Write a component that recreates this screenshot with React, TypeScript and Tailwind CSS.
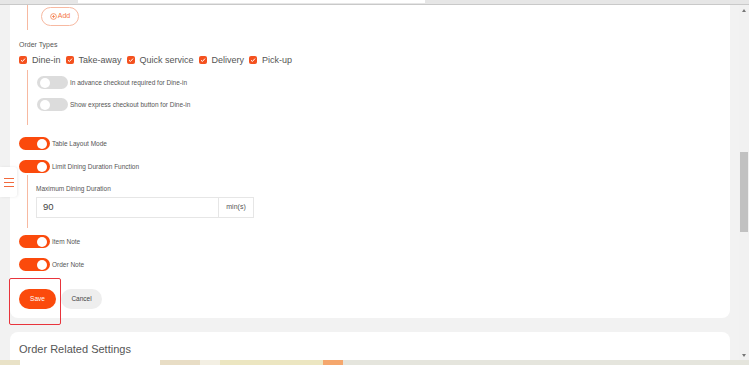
import React from 'react'

const font = { fontFamily: '"Liberation Sans", Arial, sans-serif' }

function Toggle({ on }: { on: boolean }) {
  return (
    <div className={`relative h-[13px] w-[31px] shrink-0 rounded-full ${on ? 'bg-[#fb4a0c]' : 'bg-[#dcdcdc]'}`}>
      <div className={`absolute top-[1.5px] h-[10px] w-[10px] rounded-full bg-white ${on ? 'right-[3px]' : 'left-[3px]'}`} />
    </div>
  )
}

function Check({ label }: { label: string }) {
  return (
    <div className="flex items-center gap-[5px]">
      <div className="flex h-[8px] w-[8px] items-center justify-center rounded-[2px] bg-[#f4511e]">
        <svg width="6" height="6" viewBox="0 0 6 6">
          <path d="M1 3.2 L2.4 4.5 L5 1.6" stroke="white" strokeWidth="1" fill="none" />
        </svg>
      </div>
      <span className="text-[9px] leading-[12px] text-[#555]">{label}</span>
    </div>
  )
}

function SwitchRow({ on, label, className = '' }: { on: boolean; label: string; className?: string }) {
  return (
    <div className={`flex h-[13px] items-center gap-[2px] ${className}`}>
      <Toggle on={on} />
      <span className="text-[6.5px] leading-[10px] text-[#555]">{label}</span>
    </div>
  )
}

export default function App() {
  return (
    <div className="relative flex h-[365px] w-[749px] flex-col overflow-hidden bg-[#f2f2f2]" style={font}>
      {/* top strip */}
      <div className="relative h-[5px] shrink-0 border-b border-[#c9c9c9] bg-[#e6e6e6]">
        <div className="absolute left-[78px] top-0 h-[3px] w-[347px] bg-white" />
      </div>

      <div className="flex min-h-0 flex-1">
        <div className="flex-1 overflow-hidden pl-[10px] pr-[9px]">
          {/* settings card */}
          <div className="rounded-b-lg bg-white pb-[9px] pl-[9px]">
            <div className="ml-[8px] h-[25px] border-l border-[#f7b9a1] pl-[13px] pt-[2px]">
              <div className="flex h-[19px] w-[38px] items-center justify-center gap-[1px] rounded-full border border-[#f7b9a1] text-[7px] text-[#f4743f]">
                <svg width="7" height="7" viewBox="0 0 8 8">
                  <circle cx="4" cy="4" r="3.3" stroke="#f4743f" strokeWidth="0.8" fill="none" />
                  <path d="M4 2.2 V5.8 M2.2 4 H5.8" stroke="#f4743f" strokeWidth="0.8" />
                </svg>
                Add
              </div>
            </div>

            <div className="mt-[10px] text-[7px] leading-[10px] text-[#555]">Order Types</div>
            <div className="mt-[4px] flex h-[12px] items-center gap-[5px]">
              <Check label="Dine-in" />
              <Check label="Take-away" />
              <Check label="Quick service" />
              <Check label="Delivery" />
              <Check label="Pick-up" />
            </div>

            <div className="ml-[8px] mt-[4px] h-[55px] border-l border-[#f7b9a1] pl-[9px] pt-[6px]">
              <SwitchRow on={false} label="In advance checkout required for Dine-in" />
              <SwitchRow on={false} label="Show express checkout button for Dine-in" className="mt-[9px]" />
            </div>

            <SwitchRow on label="Table Layout Mode" className="mt-[12px]" />
            <SwitchRow on label="Limit Dining Duration Function" className="mt-[10px]" />

            <div className="ml-[8px] mt-[2px] border-l border-[#f7b9a1] pb-[10px] pl-[8px] pt-[9px]">
              <div className="text-[6.5px] leading-[10px] text-[#555]">Maximum Dining Duration</div>
              <div className="mt-[3px] flex h-[21px] w-[218px] border border-[#e6e6e6]">
                <div className="flex flex-1 items-center pl-[6px] text-[9.5px] text-[#444]">90</div>
                <div className="flex w-[35px] items-center justify-center border-l border-[#e6e6e6] text-[7px] text-[#555]">min(s)</div>
              </div>
            </div>

            <SwitchRow on label="Item Note" className="mt-[7px]" />
            <SwitchRow on label="Order Note" className="mt-[10px]" />

            <div className="mt-[18px] flex gap-[5px]">
              <div className="flex h-[20px] w-[37px] items-center justify-center rounded-full bg-[#fb4a0c] text-[6.5px] text-white">Save</div>
              <div className="flex h-[20px] w-[41px] items-center justify-center rounded-full bg-[#eeeeee] text-[6.5px] text-[#444]">Cancel</div>
            </div>
          </div>

          {/* next card */}
          <div className="mt-[14px] h-[40px] rounded-t-lg bg-white pl-[9px] pt-[10px]">
            <div className="text-[11px] leading-[14px] text-[#555]">Order Related Settings</div>
          </div>
        </div>

        {/* scrollbar */}
        <div className="relative w-[10px] shrink-0 bg-[#f1f1f1]">
          <div className="absolute left-[3px] top-[4px] h-0 w-0 border-x-[2px] border-b-[3px] border-x-transparent border-b-[#777]" />
          <div className="absolute left-[1px] top-[147px] h-[80px] w-[8px] bg-[#c1c1c1]" />
          <div className="absolute bottom-[3px] left-[3px] h-0 w-0 border-x-[2px] border-t-[3px] border-x-transparent border-t-[#777]" />
        </div>
      </div>

      {/* taskbar strip */}
      <div className="flex h-[5px] shrink-0">
        <div className="w-[20px] bg-[#e9e2c7]" />
        <div className="w-[140px] bg-white" />
        <div className="w-[40px] bg-[#e8ddc5]" />
        <div className="w-[20px] bg-[#f3efe3]" />
        <div className="w-[103px] bg-[#ece6c1]" />
        <div className="w-[20px] bg-[#f5a76d]" />
        <div className="flex-1 bg-[#e5e5dd]" />
      </div>

      {/* side menu tab */}
      <div className="absolute left-0 top-[167px] flex h-[30px] w-[17px] flex-col justify-center gap-[3px] rounded-r-[3px] bg-white pl-[4px] shadow-[1px_0_3px_rgba(0,0,0,0.08)]">
        <div className="h-[1px] w-[10px] bg-[#f26a3d]" />
        <div className="h-[1px] w-[10px] bg-[#f26a3d]" />
        <div className="h-[1px] w-[10px] bg-[#f26a3d]" />
      </div>

      {/* highlight box */}
      <div className="absolute left-[9px] top-[278px] h-[47px] w-[52px] rounded-[2px] border-[1.5px] border-[#e8343c]" />
    </div>
  )
}
